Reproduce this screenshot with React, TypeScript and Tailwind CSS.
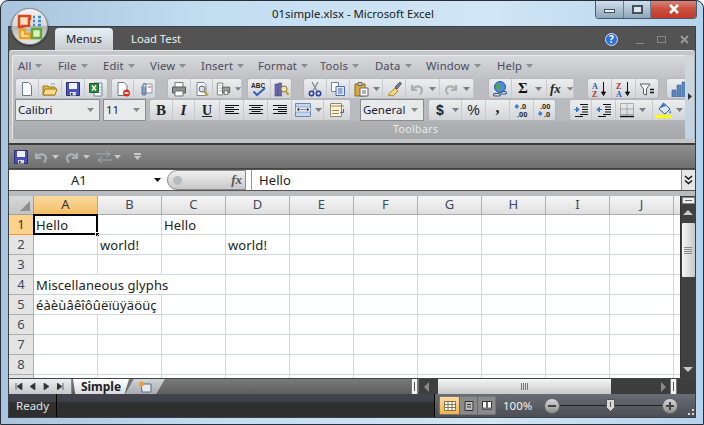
import React from 'react';

const Svg = ({ children, className = 'w-4 h-4' }: { children: React.ReactNode; className?: string }) => (
    <svg viewBox="0 0 16 16" className={className}>{children}</svg>
);

const icons: Record<string, React.ReactNode> = {
    newDoc: <path d="M3.5 1.5h6l3 3v10h-9z" fill="#fff" stroke="#6b7a8a" />,
    open: <><path d="M1 5h5l1 1h6v8H1z" fill="#e0b64e" stroke="#a07c20" /><path d="M3 8h12l-2 6H1z" fill="#f6dc8a" stroke="#a07c20" /><path d="M9 4c1-2 3-2 4 0" fill="none" stroke="#8a9aa8" /></>,
    save: <><path d="M1.5 1.5h13v13h-13z" fill="#4a52b8" stroke="#2a2f7a" /><path d="M4 2h8v6H4z" fill="#eef0fa" /><path d="M5 11h6v3.5H5z" fill="#d8d8d8" /><path d="M6 12h1.5v2H6z" fill="#333" /></>,
    xls: <><path d="M6 2h8v13H6z" fill="#fff" stroke="#6b87a8" /><path d="M1.5 2.5h9v9h-9z" fill="#2e8b3d" stroke="#1c5e28" /><path d="M4 4.5l4 5M8 4.5l-4 5" stroke="#fff" strokeWidth="1.4" /><path d="M11.5 6h2M11.5 9h2M11.5 12h2" stroke="#7d9cc0" /></>,
    perm: <><path d="M3 1.5h6l3 3v10H3z" fill="#fff" stroke="#6b7a8a" /><circle cx="11.5" cy="12" r="3.5" fill="#d8321e" /><path d="M9.5 12h4" stroke="#fff" strokeWidth="1.5" /></>,
    clip: <><path d="M7 3h8v9H7z" fill="#f4f6fa" stroke="#8a9ab0" /><path d="M11 6h3" stroke="#d0503c" /><path d="M5 5v7c0 3 4 3 4 0V4C9 2 6 2 6 4v8c0 1 2 1 2 0V6" fill="none" stroke="#6a86a8" strokeWidth="1.1" /></>,
    print: <><path d="M4 1.5h8v5H4z" fill="#fff" stroke="#777" /><path d="M1.5 6h13v6h-13z" fill="#8d8f93" stroke="#55575a" /><path d="M4 10h8v5H4z" fill="#fff" stroke="#777" /><path d="M11.5 7.5h2" stroke="#5ac83c" strokeWidth="1.5" /></>,
    preview: <><path d="M3 1.5h7l2 2v11H3z" fill="#fff" stroke="#7a8a9a" /><circle cx="8" cy="8" r="3" fill="#cfe3f6" stroke="#666" /><path d="M10 10.5l4 4" stroke="#c89a28" strokeWidth="2" /></>,
    printPrev: <><path d="M1.5 1.5h6v13h-6z" fill="#fff" stroke="#777" /><path d="M3 4h3M3 7h3M3 10h3" stroke="#777" strokeDasharray="1 1" /><path d="M7 6h8v6H7z" fill="#9a9ca0" stroke="#55575a" /><path d="M9 10h4v4H9z" fill="#fff" stroke="#666" /></>,
    spell: <><text x="0" y="6.5" fontSize="6.5" fontWeight="700" fontFamily="Liberation Sans, sans-serif" fill="#222">ABC</text><path d="M2.5 10.5l3.5 3.5 8-7" fill="none" stroke="#3a66b4" strokeWidth="2.2" /></>,
    research: <><path d="M2 3h3v12H2zM5.5 2h3v13h-3z" fill="#6a68b8" stroke="#44427a" strokeWidth=".6" /><circle cx="11" cy="8" r="3" fill="#f4e6a8" stroke="#8a7a3a" /><path d="M13 10.5l2.5 3.5" stroke="#c89a28" strokeWidth="2" /></>,
    cut: <><path d="M5 1l5 9M11 1L6 10" stroke="#7f8a96" strokeWidth="1.3" /><circle cx="4.5" cy="12.5" r="2.2" fill="none" stroke="#2a3a9a" strokeWidth="1.5" /><circle cx="11.5" cy="12.5" r="2.2" fill="none" stroke="#2a3a9a" strokeWidth="1.5" /></>,
    copy: <><path d="M1.5 1.5h7v9h-7z" fill="#fff" stroke="#6c88b4" /><path d="M6 5.5h8.5v9H6z" fill="#dfe9f8" stroke="#4a6ea8" /><path d="M8 8h4.5M8 10h4.5M8 12h4.5" stroke="#4a6ea8" /></>,
    paste: <><path d="M2 3h10v12H2z" fill="#d9a93a" stroke="#8a6a1e" /><path d="M5 1.5h4v3H5z" fill="#c8ccd4" stroke="#666" /><path d="M7 7h8v8H7z" fill="#fff" stroke="#667" /><path d="M9 10h4M9 12h4" stroke="#667" /></>,
    brush: <><path d="M9 7l-7 7 5 1 5-5z" fill="#f1d77a" stroke="#a58a30" /><path d="M9 6l5-5 1.5 1.5L11 8z" fill="#7e7e96" stroke="#55556a" /></>,
    undo: <path d="M3 4v5h5M3.5 8.5C6 4.5 12 4 13 9c.3 2-1 3.5-2 4.5" fill="none" stroke="#aab0b6" strokeWidth="2.2" />,
    redo: <path d="M13 4v5H8M12.5 8.5C10 4.5 4 4 3 9c-.3 2 1 3.5 2 4.5" fill="none" stroke="#aab0b6" strokeWidth="2.2" />,
    web: <><circle cx="8" cy="6" r="5.5" fill="#4a8ed8" stroke="#2a5a98" /><path d="M5 2l3 2-1 3 2 3-3-1-2-3z" fill="#56a83c" /><path d="M2 12.5h5c2 0 2 2.5 0 2.5H3c-2 0-2-2.5 0-2.5zM9 10.5h4c2 0 2 2.5 0 2.5H9" fill="none" stroke="#3a5a8a" strokeWidth="1.2" /></>,
    sortAz: <><text x="0" y="7.5" fontSize="8" fontWeight="700" fontFamily="Liberation Serif, serif" fill="#2a5ab0">A</text><text x="0" y="15.5" fontSize="8" fontWeight="700" fontFamily="Liberation Serif, serif" fill="#a83232">Z</text><path d="M11.5 1v12M9.5 11l2 3.5 2-3.5z" stroke="#111" fill="#111" /></>,
    sortZa: <><text x="0" y="7.5" fontSize="8" fontWeight="700" fontFamily="Liberation Serif, serif" fill="#a83232">Z</text><text x="0" y="15.5" fontSize="8" fontWeight="700" fontFamily="Liberation Serif, serif" fill="#2a5ab0">A</text><path d="M11.5 1v12M9.5 11l2 3.5 2-3.5z" stroke="#111" fill="#111" /></>,
    filter: <><path d="M1 3h10L7.5 8v6l-3-1V8z" fill="#f6f7f9" stroke="#5a6068" /><path d="M11 8.5h4M11 11.5h4" stroke="#111" strokeWidth="1.6" /></>,
    chart: <><path d="M1 9h4v7H1zM6 4h4v12H6zM11 1h4v15h-4z" fill="#5a86c0" stroke="#3a5c90" strokeWidth=".6" /></>,
    alignL: <path d="M1 3.5h14M1 5.5h9M1 7.5h14M1 9.5h9M1 11.5h14" stroke="#111" />,
    alignC: <path d="M1 3.5h14M3.5 5.5h9M1 7.5h14M3.5 9.5h9M1 11.5h14" stroke="#111" />,
    alignR: <path d="M1 3.5h14M6 5.5h9M1 7.5h14M6 9.5h9M1 11.5h14" stroke="#111" />,
    merge: <><path d="M.5 1.5h15v13H.5z" fill="#c5d6ee" stroke="#6a88b4" /><path d="M.5 5h15v5H.5z" fill="#eef3fa" stroke="#6a88b4" strokeWidth=".6" /><path d="M5 7.5h6M2 7.5l2-1.2v2.4zM14 7.5l-2-1.2v2.4z" stroke="#333" fill="#333" strokeWidth=".6" /></>,
    wrap: <><path d="M1.5 1.5h11v13h-11z" fill="#f8f4e6" stroke="#8a8a7a" /><path d="M1 4h14" stroke="#c87a2a" strokeWidth="1.2" /><path d="M3 8.5h7M3 11.5h7" stroke="#c87a2a" strokeWidth="1.2" /><path d="M14.5 7v3.5h-3l1.3-1.3" fill="none" stroke="#3a66b4" /></>,
    incDec: <><path d="M1 4.5h4M1 4.5l2.5-2M1 4.5l2.5 2" stroke="#3a78c8" strokeWidth="1.3" fill="none" /><text x="6" y="7" fontSize="7.5" fontFamily="Liberation Sans, sans-serif" fontWeight="700" fill="#222">.0</text><text x="3" y="15" fontSize="7.5" fontFamily="Liberation Sans, sans-serif" fontWeight="700" fill="#222">.00</text></>,
    decDec: <><text x="3" y="7" fontSize="7.5" fontFamily="Liberation Sans, sans-serif" fontWeight="700" fill="#222">.00</text><path d="M1 11.5h4M5 11.5l-2.5-2M5 11.5l-2.5 2" stroke="#3a78c8" strokeWidth="1.3" fill="none" /><text x="7" y="15" fontSize="7.5" fontFamily="Liberation Sans, sans-serif" fontWeight="700" fill="#222">.0</text></>,
    indDec: <><path d="M7 2.5h8M9 5h6M9 7.5h6M9 10h6M7 12.5h8M2 14.5h8" stroke="#111" /><path d="M1 7.5h5M6 7.5l-2.5-2.5v5z" stroke="#3a78c8" fill="#3a78c8" /></>,
    indInc: <><path d="M7 2.5h8M9 5h6M9 7.5h6M9 10h6M7 12.5h8M2 14.5h8" stroke="#111" /><path d="M6 7.5H1M1 7.5l2.5-2.5v5z" stroke="#3a78c8" fill="#3a78c8" /></>,
    borders: <><path d="M1.5 1.5h13v11h-13zM8 1.5v11M1.5 7h13" fill="none" stroke="#777" strokeDasharray="1 1" /><path d="M1 14.5h14" stroke="#111" strokeWidth="1.4" /></>,
    fill: <><path d="M7.5 1L14 7l-5 5-6-5z" fill="#dfe9f6" stroke="#3a5a8a" /><path d="M3 6.5L7.5 1 10 4z" fill="#3a78c8" /><path d="M14 8c1 2 1.500 3 .5 3.500S13 10 14 8z" fill="#3a78c8" /><path d="M0 13h16v3H0z" fill="#ffff00" /></>,
};

const Ico = ({ name }: { name: string }) => <Svg>{icons[name]}</Svg>;

const Caret = ({ color = '#7a7e84' }: { color?: string }) => (
    <svg viewBox="0 0 7 4" className="w-[7px] h-[4px]"><path d="M0 0h7L3.500 4z" fill={color} /></svg>
);

const Btn = ({ w, children, last }: { w: string; children: React.ReactNode; last?: boolean }) => (
    <div className={`${w} h-full flex items-center justify-center shrink-0 ${last ? '' : 'border-r border-[#c8cacd]'}`}>{children}</div>
);

const Split = ({ w, children }: { w: string; children: React.ReactNode }) => (
    <div className={`${w} h-full flex items-center shrink-0 pl-[3px] gap-[4px] border-r border-[#c8cacd]`}>{children}<Caret /></div>
);

const Group = ({ className, children }: { className?: string; children: React.ReactNode }) => (
    <div className={`h-full flex shrink-0 rounded-[3px] border border-[#b4b7bb] bg-gradient-to-b from-[#eceeef] to-[#d2d4d8] overflow-hidden ${className ?? ''}`}>{children}</div>
);

const Combo = ({ w, label }: { w: string; label: string }) => (
    <div className={`${w} h-full shrink-0 border border-[#8a8d91] bg-[#e8e9ea] flex items-center justify-between pl-[2px] pr-[5px] text-[11.5px] text-[#1b1b3a]`}>
        <span>{label}</span><Caret color="#888" />
    </div>
);

const menus = [
    ['All', 'w-[40px]'], ['File', 'w-[45px]'], ['Edit', 'w-[47px]'], ['View', 'w-[51px]'], ['Insert', 'w-[57px]'],
    ['Format', 'w-[62px]'], ['Tools', 'w-[55px]'], ['Data', 'w-[51px]'], ['Window', 'w-[71px]'], ['Help', 'w-[50px]'],
];

const columns = ['A', 'B', 'C', 'D', 'E', 'F', 'G', 'H', 'I', 'J'];

const rows: { n: number; cells: { t?: string; span?: string }[] }[] = [
    { n: 1, cells: [{ t: 'Hello' }, {}, { t: 'Hello' }, ...Array(8).fill({})] },
    { n: 2, cells: [{}, { t: 'world!' }, {}, { t: 'world!' }, ...Array(7).fill({})] },
    { n: 3, cells: Array(11).fill({}) },
    { n: 4, cells: [{ t: 'Miscellaneous glyphs', span: 'col-span-3' }, ...Array(8).fill({})] },
    { n: 5, cells: [{ t: 'éàèùâêîôûëïüÿäöüç', span: 'col-span-2' }, ...Array(9).fill({})] },
    { n: 6, cells: Array(11).fill({}) },
    { n: 7, cells: Array(11).fill({}) },
    { n: 8, cells: Array(11).fill({}) },
    { n: 9, cells: Array(11).fill({}) },
];

const Ribbon = () => (
    <div className="h-[93px] flex bg-[#c3c5c8] pl-[3px] pr-[1px] pt-[4px] rounded-t-[3px] border-t border-[#e4e6e8]">
        <div className="w-[673px] h-[84px] shrink-0 flex flex-col overflow-hidden rounded-tl-[3px] border-t border-l border-[#e8eaec] bg-gradient-to-b from-[#d6d8db] via-[#bcbec2] via-30% to-[#b6b8bb]">
            <div className="h-[20px] flex items-center pl-[5px] text-[11.25px] tracking-[0.15px] text-[#4c4c60] shrink-0">
                {menus.map(([m, w]) => (
                    <div key={m} className={`${w} flex items-center gap-[4px] shrink-0`}><span>{m}</span><Caret color="#8a8d91" /></div>
                ))}
            </div>
            <div className="h-[21px] flex pl-[2px] mt-[2px] shrink-0">
                <Group>
                    {['newDoc', 'open', 'save'].map(n => <Btn key={n} w="w-[23px]"><Ico name={n} /></Btn>)}
                    <Btn w="w-[22px]" last><Ico name="xls" /></Btn>
                </Group>
                <Group className="ml-[3px]">
                    <Btn w="w-[22px]"><Ico name="perm" /></Btn><Btn w="w-[21px]" last><Ico name="clip" /></Btn>
                </Group>
                <Group className="ml-[11px]">
                    <Btn w="w-[23px]"><Ico name="print" /></Btn><Btn w="w-[22px]"><Ico name="preview" /></Btn>
                    <Split w="w-[29px]"><Ico name="printPrev" /></Split>
                </Group>
                <Group className="ml-[4px]">
                    <Btn w="w-[23px]"><Ico name="spell" /></Btn><Btn w="w-[20px]" last><Ico name="research" /></Btn>
                </Group>
                <Group className="ml-[11px]">
                    <Btn w="w-[23px]"><Ico name="cut" /></Btn><Btn w="w-[23px]"><Ico name="copy" /></Btn>
                    <Split w="w-[33px]"><Ico name="paste" /></Split>
                    <Btn w="w-[23px]"><Ico name="brush" /></Btn>
                    <Split w="w-[34px]"><Ico name="undo" /></Split>
                    <Split w="w-[34px]"><Ico name="redo" /></Split>
                </Group>
                <Group className="ml-[13px]">
                    <Btn w="w-[23px]"><Ico name="web" /></Btn>
                    <Split w="w-[35px]"><span className="w-[16px] text-center font-['Liberation_Serif',serif] font-bold text-[15px] text-[#111] leading-none">Σ</span></Split>
                    <Split w="w-[27px]"><span className="w-[14px] font-['Liberation_Serif',serif] italic font-bold text-[13px] text-[#222] leading-none">fx</span></Split>
                </Group>
                <Group className="ml-[12px]">
                    <Btn w="w-[24px]"><Ico name="sortAz" /></Btn><Btn w="w-[24px]"><Ico name="sortZa" /></Btn><Btn w="w-[22px]" last><Ico name="filter" /></Btn>
                </Group>
                <Group className="ml-[7px] w-[30px]"><Btn w="w-[24px]" last><Ico name="chart" /></Btn></Group>
            </div>
            <div className="h-[22px] flex pl-[2px] mt-0 shrink-0">
                <Combo w="w-[85px]" label="Calibri" />
                <Combo w="w-[43px] ml-[3px]" label="11" />
                <Group className="ml-[3px]">
                    <Btn w="w-[23px]"><span className="font-['Liberation_Serif',serif] font-bold text-[15px] text-[#222]">B</span></Btn>
                    <Btn w="w-[22px]"><span className="font-['Liberation_Serif',serif] italic font-bold text-[15px] text-[#222]">I</span></Btn>
                    <Btn w="w-[25px]"><span className="font-['Liberation_Serif',serif] font-bold underline text-[14px] text-[#222]">U</span></Btn>
                    <Btn w="w-[24px]"><Ico name="alignL" /></Btn>
                    <Btn w="w-[24px]"><Ico name="alignC" /></Btn>
                    <Btn w="w-[24px]"><Ico name="alignR" /></Btn>
                    <Split w="w-[32px]"><Ico name="merge" /></Split>
                    <Btn w="w-[26px]" last><Ico name="wrap" /></Btn>
                </Group>
                <Combo w="w-[64px] ml-[9px]" label="General" />
                <Group className="ml-[4px]">
                    <Split w="w-[33px]"><span className="w-[16px] text-center font-['Liberation_Sans',sans-serif] font-bold text-[14px] text-[#222]">$</span></Split>
                    <Btn w="w-[24px]"><span className="font-['Liberation_Sans',sans-serif] text-[14px] text-[#222]">%</span></Btn>
                    <Btn w="w-[24px]"><span className="font-['Liberation_Serif',serif] font-bold text-[16px] leading-none text-[#222] -mt-[5px]">,</span></Btn>
                    <Btn w="w-[24px]"><Ico name="incDec" /></Btn>
                    <Btn w="w-[21px]" last><Ico name="decDec" /></Btn>
                </Group>
                <Group className="ml-[13px]">
                    <Btn w="w-[22px]"><Ico name="indDec" /></Btn><Btn w="w-[24px]"><Ico name="indInc" /></Btn>
                    <Split w="w-[37px]"><Ico name="borders" /></Split>
                    <Split w="w-[36px]"><Ico name="fill" /></Split>
                </Group>
            </div>
            <div className="flex-1 flex items-center pl-[380px] text-[10.5px] tracking-[0.4px] text-[#e9eaec] bg-gradient-to-b from-[#b0b2b5] to-[#a6a8ab]">Toolbars</div>
        </div>
        <div className="w-[10px] h-[84px] shrink-0 flex flex-col items-center pt-[38px] bg-gradient-to-b from-[#d2d6da] to-[#c2d4e4] border-r border-[#aab0b6]">
            <svg viewBox="0 0 4 7" className="w-[4px] h-[7px]"><path d="M0 0l4 3.500L0 7z" fill="#333" /></svg>
        </div>
    </div>
);

const FormulaBar = () => (
    <div className="h-[22px] flex bg-white border-y border-[#555] text-[#222] shrink-0">
        <div className="w-[145px] pl-[62px] pt-px flex items-center text-[13px] shrink-0">A1</div>
        <div className="w-[8px] flex items-center shrink-0"><Caret color="#111" /></div>
        <div className="w-[79px] ml-[5px] flex items-center justify-between pl-[5px] pr-[3px] rounded-l-full border border-[#8a8a8a] bg-gradient-to-b from-[#f0f0f0] to-[#c8c8c8] shrink-0">
            <span className="w-[9px] h-[9px] rounded-full bg-[#b9bcbf]" />
            <span className="font-['Liberation_Serif',serif] italic font-bold text-[13px] text-[#555]">fx</span>
        </div>
        <div className="flex-1 ml-[5px] pl-[7px] pt-px flex items-center text-[13px] tracking-[0.1px] border-l border-[#999]">Hello</div>
        <div className="w-[14px] flex items-center justify-center bg-[#e6e6e6] border-l border-[#888] shrink-0">
            <svg viewBox="0 0 9 10" className="w-[9px] h-[10px]"><path d="M1 1l3.500 3L8 1M1 5.500l3.500 3L8 5.500" fill="none" stroke="#111" strokeWidth="1.5" /></svg>
        </div>
    </div>
);

const Grid = () => (
    <div className="flex-1 overflow-hidden bg-white grid grid-cols-[25px_repeat(10,64px)_7px] grid-rows-[19px_repeat(9,20px)] text-[13px] tracking-[0.12px] text-[#222]">
        <div className="bg-gradient-to-b from-[#d8d8d8] to-[#c4c4c4] border-r border-b border-[#a0a0a0] flex items-end justify-end p-[3px]">
            <svg viewBox="0 0 10 10" className="w-[10px] h-[10px]"><path d="M10 0v10H0z" fill="#8f8f8f" /></svg>
        </div>
        {columns.map(c => (
            <div key={c} className={`flex items-center justify-center border-r border-b ${c === 'A' ? 'bg-gradient-to-b from-[#f9dba0] to-[#f3bd62] border-[#f29536] text-[#333]' : 'bg-gradient-to-b from-[#f7f7f7] to-[#dfdfdf] border-[#aeaeae] text-[#3c4a5c]'}`}>{c}</div>
        ))}
        <div className="bg-gradient-to-b from-[#f7f7f7] to-[#dfdfdf] border-b border-[#aeaeae]" />
        {rows.map(r => (
            <React.Fragment key={r.n}>
                <div className={`flex items-center justify-center border-r border-b ${r.n === 1 ? 'bg-[#fbd38a] border-[#f29536] text-[#333]' : 'bg-[#e4e4e4] border-[#aeaeae] text-[#3c4a5c]'}`}>{r.n}</div>
                {r.cells.map((c, i) => (
                    <div key={i} className={`relative pl-[2px] pt-[2px] flex items-center whitespace-nowrap border-r border-b border-[#d0d7e5] ${c.span ?? ''}`}>
                        {c.t}
                        {r.n === 1 && i === 0 && (
                            <div className="absolute -left-px -top-px w-[65px] h-[21px] border-2 border-black">
                                <div className="absolute -right-[4px] -bottom-[4px] w-[5px] h-[5px] bg-black border border-white" />
                            </div>
                        )}
                    </div>
                ))}
            </React.Fragment>
        ))}
    </div>
);

const VScroll = () => (
    <div className="w-[15px] shrink-0 flex flex-col items-center bg-[#404040] border-l border-[#333]">
        <div className="w-[13px] h-[7px] mt-[1px] bg-[#f0f0f0] border border-[#888] flex items-center justify-center"><div className="w-[7px] h-px bg-[#666]" /></div>
        <svg viewBox="0 0 10 5" className="w-[10px] h-[5px] mt-[6px]"><path d="M0 5l5-5 5 5z" fill="#c8c8c8" /></svg>
        <div className="w-[13px] h-[54px] mt-[8px] rounded-[1px] bg-gradient-to-r from-[#f6f6f6] to-[#c8c8c8] flex flex-col items-center justify-center gap-px">
            {[0, 1, 2, 3].map(i => <div key={i} className="w-[8px] h-px bg-[#888]" />)}
        </div>
        <div className="flex-1" />
        <svg viewBox="0 0 10 5" className="w-[10px] h-[5px] mb-[6px]"><path d="M0 0l5 5 5-5z" fill="#c8c8c8" /></svg>
    </div>
);

const Sheets = () => (
    <div className="h-[16px] flex shrink-0 bg-gradient-to-b from-[#7a7a7a] to-[#5e5e5e] border-t border-[#444]">
        <div className="w-[63px] flex items-center justify-around px-[3px] bg-gradient-to-b from-[#eceff2] to-[#c6c8cc] border-r border-[#888] text-[#333] shrink-0">
            {['M1 0v7M7 0L2 3.500 7 7z', 'M6 0L1 3.500 6 7z', 'M1 0l5 3.500L1 7z', 'M0 0l5 3.500L0 7zM6 0v7'].map(d => (
                <svg key={d} viewBox="0 0 8 7" className="w-[8px] h-[7px]"><path d={d} fill="#333" stroke="#333" strokeWidth=".7" /></svg>
            ))}
        </div>
        <div className="w-[56px] ml-[1px] flex items-center justify-center font-bold text-[12px] leading-none text-[#222] bg-gradient-to-b from-[#ffffff] to-[#d8dadd] [clip-path:polygon(0_0,100%_0,92%_100%,4%_100%)] shrink-0">Simple</div>
        <div className="w-[40px] -ml-[4px] flex items-center justify-center bg-gradient-to-b from-[#d0d3d6] to-[#a8abaf] [clip-path:polygon(22%_0,100%_0,78%_100%,0_100%)] shrink-0">
            <svg viewBox="0 0 14 12" className="w-[14px] h-[12px]"><path d="M3 3h10v8H4z" fill="#e6eaf0" stroke="#5a6a80" /><circle cx="3.500" cy="3" r="2.500" fill="#f0a030" /></svg>
        </div>
        <div className="flex-1" />
        <div className="w-[7px] bg-[#f2f2f2] border-x border-[#777] flex items-center justify-center shrink-0"><div className="w-px h-[9px] bg-[#555]" /></div>
        <div className="w-[260px] ml-[1px] flex items-center bg-[#3e3e3e] shrink-0 pl-[5px]">
            <svg viewBox="0 0 5 10" className="w-[5px] h-[10px]"><path d="M5 0L0 5l5 5z" fill="#8a8a8a" /></svg>
            <div className="w-[173px] h-full ml-[9px] bg-gradient-to-b from-[#f6f6f6] to-[#c9c9c9] flex items-center justify-center gap-px">
                {[0, 1, 2, 3].map(i => <div key={i} className="w-px h-[7px] bg-[#777]" />)}
            </div>
            <svg viewBox="0 0 5 10" className="w-[5px] h-[10px] ml-[50px]"><path d="M0 0l5 5-5 5z" fill="#8a8a8a" /></svg>
            <div className="w-[7px] h-full ml-[4px] bg-[#f2f2f2] border-x border-[#777] flex items-center justify-center"><div className="w-px h-[9px] bg-[#555]" /></div>
        </div>
        <div className="w-[16px] bg-[#3e3e3e] shrink-0" />
    </div>
);

const RoundBtn = ({ plus }: { plus?: boolean }) => (
    <div className="relative w-[16px] h-[16px] rounded-full border border-[#666] bg-gradient-to-b from-[#d8d8d8] to-[#8f8f8f] flex items-center justify-center shrink-0">
        <div className="w-[8px] h-[2px] bg-[#444]" />
        {plus && <div className="absolute w-[2px] h-[8px] bg-[#444]" />}
    </div>
);

const StatusBar = () => (
    <div className="h-[23px] flex shrink-0 items-stretch bg-[linear-gradient(#41434d_0%,#3e404a_35%,#303030_36%,#2e2e2e_100%)] text-[11.5px] text-[#dfe3e8]">
        <div className="w-[48px] pl-[7px] flex items-center border-r border-black shrink-0">Ready</div>
        <div className="flex-1" />
        <div className="w-[261px] flex items-center pl-[4px] border-l border-black bg-gradient-to-b from-[#6a6d75] to-[#4c4e54] shrink-0">
            <div className="w-[57px] h-[19px] flex items-stretch rounded-[2px] border border-[#777] bg-[#8a8a8a] shrink-0">
                <div className="w-[19px] flex items-center justify-center bg-gradient-to-b from-[#fbdc9c] to-[#f2b44c]">
                    <svg viewBox="0 0 12 10" className="w-[12px] h-[10px]"><path d="M.5.500h11v9H.5zM4 .5v9M8 .5v9M.5 3.500h11M.5 6.500h11" fill="#fff" stroke="#6a5a30" strokeWidth=".8" /></svg>
                </div>
                <div className="w-[19px] flex items-center justify-center border-x border-[#666]">
                    <svg viewBox="0 0 10 10" className="w-[10px] h-[10px]"><path d="M1 .5h8v9H1z" fill="#bbb" stroke="#333" /><path d="M3 3.500h4M3 6h4" stroke="#333" /></svg>
                </div>
                <div className="flex-1 flex items-center justify-center">
                    <svg viewBox="0 0 10 10" className="w-[10px] h-[10px]"><path d="M.5.500h9v8h-9z" fill="#fff" stroke="#333" /><path d="M5 .5v8" stroke="#333" strokeWidth="1.5" /><path d="M.5 6.500h9v2h-9z" fill="#777" /></svg>
                </div>
            </div>
            <span className="w-[32px] ml-[7px] text-[#eef1f5] shrink-0">100%</span>
            <div className="ml-[9px]"><RoundBtn /></div>
            <div className="relative w-[102px] h-px bg-[#222] shrink-0">
                <svg viewBox="0 0 9 13" className="absolute left-[46px] -top-[6px] w-[9px] h-[13px]"><path d="M.5.500h8v8l-4 4-4-4z" fill="#d8d8d8" stroke="#555" /><path d="M4.500 3v5" stroke="#555" /></svg>
            </div>
            <RoundBtn plus />
            <svg viewBox="0 0 12 12" className="w-[12px] h-[12px] ml-[9px] self-end mb-px shrink-0"><path d="M9 1h2v2H9zM5 5h2v2H5zM9 5h2v2H9zM1 9h2v2H1zM5 9h2v2H5zM9 9h2v2H9z" fill="#d4d6d8" /></svg>
        </div>
    </div>
);

const App: React.FC = () => (
    <div className="relative w-[704px] h-[425px] flex flex-col overflow-hidden rounded-t-[8px] border border-[#27303a] bg-[linear-gradient(90deg,#a9c4dc_0%,#c3ddf1_30%,#d1e6f6_70%,#b5d3ec_100%)] font-['Noto_Sans',sans-serif]">
        <div className="h-[25px] flex shrink-0 pl-[271px]">
            <div className="pt-[4px] text-[11.4px] text-[#1a1a1a]">01simple.xlsx - Microsoft Excel</div>
            <div className="ml-auto mr-[6px] w-[102px] h-[19px] -mt-px flex rounded-b-[4px] border border-t-0 border-[#4a5a6a] overflow-hidden shrink-0">
                <div className="w-[28px] flex items-center justify-center bg-gradient-to-b from-[#d4e2ee] to-[#8ea6bc] border-r border-[#6a7f92]">
                    <div className="w-[11px] h-[4px] mt-[4px] bg-[#eef2f6] border border-[#44505c]" />
                </div>
                <div className="w-[27px] flex items-center justify-center bg-gradient-to-b from-[#d4e2ee] to-[#8ea6bc] border-r border-[#6a7f92]">
                    <div className="w-[11px] h-[9px] border-2 border-[#44505c] bg-[#dfe8f0]" />
                </div>
                <div className="flex-1 flex items-center justify-center bg-gradient-to-b from-[#d98a80] via-[#c9503f] to-[#c23a2a]">
                    <svg viewBox="0 0 12 10" className="w-[12px] h-[10px]"><path d="M2 1l8 8M10 1L2 9" stroke="#fff" strokeWidth="2.5" /></svg>
                </div>
            </div>
        </div>
        <div className="flex-1 mx-[7px] flex flex-col bg-[#595959] border border-[#3a4048] min-h-0">
            <div className="h-[23px] flex shrink-0 bg-[#535353] items-end text-[11.25px]">
                <div className="ml-[46px] w-[58px] h-[22px] flex items-center justify-center rounded-t-[4px] bg-gradient-to-b from-[#e4f1f8] to-[#c8cacd] text-[#1a1a2a]">Menus</div>
                <div className="ml-[18px] h-[22px] flex items-center text-[#eef0f2]">Load Test</div>
                <div className="ml-auto h-[22px] flex items-center">
                    <div className="w-[13px] h-[13px] rounded-full bg-[#2f6fd6] border border-[#cfe0f8] flex items-center justify-center text-[10px] font-bold text-white leading-none">?</div>
                    <div className="w-[8px] h-px mt-[8px] ml-[18px] bg-[#888]" />
                    <div className="w-[9px] h-[7px] ml-[13px] border border-[#888]" />
                    <svg viewBox="0 0 9 9" className="w-[9px] h-[9px] ml-[14px] mr-[6px]"><path d="M1 1l7 7M8 1L1 8" stroke="#999" strokeWidth="2" /></svg>
                </div>
            </div>
            <Ribbon />
            <div className="h-[2px] bg-[#3c3c3c] shrink-0" />
            <div className="h-[24px] flex items-center pl-[4px] gap-[1px] bg-gradient-to-b from-[#8f8f8f] to-[#6f6f6f] border-b border-[#444] shrink-0">
                <Ico name="save" />
                <div className="ml-[3px] flex items-center gap-[3px]"><Svg>{icons.undo}</Svg><Caret color="#c8c8c8" /></div>
                <div className="ml-[4px] flex items-center gap-[3px]"><Svg>{icons.redo}</Svg><Caret color="#c8c8c8" /></div>
                <div className="ml-[5px] flex items-center gap-[2px]">
                    <svg viewBox="0 0 16 14" className="w-[16px] h-[14px]"><path d="M0 4h13M10 1l4 3-4 3M16 10H3M6 7l-4 3 4 3" fill="none" stroke="#a4a8ac" /></svg>
                    <Caret color="#c8c8c8" />
                </div>
                <div className="ml-[12px] w-[7px] border-t-2 border-[#c8c8c8] pt-px"><Caret color="#c8c8c8" /></div>
            </div>
            <FormulaBar />
            <div className="h-[5px] bg-[#b9bbbe] shrink-0" />
            <div className="flex-1 flex min-h-0">
                <Grid />
                <VScroll />
            </div>
            <Sheets />
            <StatusBar />
        </div>
        <div className="h-[6px] shrink-0" />
        {/* office orb sits over the title bar and tab strip */}
        <div className="absolute left-[10px] top-[7px] w-[37px] h-[37px] rounded-full border border-[#8a8a8a] bg-[linear-gradient(#f4f4f4_0%,#d8d8d8_48%,#b4b4b4_50%,#e8e8e8_100%)] flex items-center justify-center shadow-[0_1px_2px_#222]">
            <svg viewBox="0 0 26 26" className="w-[26px] h-[26px]">
                <path d="M2 2h11v3h-1v7H5v1H2z" fill="#f8e0c0" stroke="#d8481e" strokeWidth="2.5" />
                <path d="M16 3h2M21 3h3M16 7h2M21 7h3M16 11h2M21 11h3" stroke="#3b8ad8" strokeWidth="2.5" />
                <path d="M3 16v8h10v-4H8v-4z" fill="#fce8b0" stroke="#f2a01e" strokeWidth="2.5" />
                <path d="M15 15h9v9h-9z" fill="#dff0c8" stroke="#62a832" strokeWidth="2.5" />
                <path d="M9 14h5" stroke="#c8c8b8" strokeWidth="2" />
            </svg>
        </div>
    </div>
);

export default App;
